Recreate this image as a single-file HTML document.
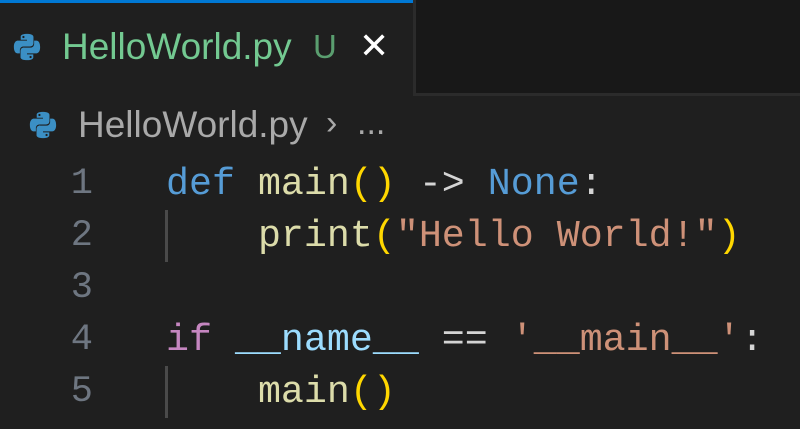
<!DOCTYPE html>
<html><head><style>
body{margin:0;width:800px;height:429px;background:#1f1f1f;overflow:hidden;position:relative;font-family:"Liberation Sans",sans-serif}
.topr{position:absolute;left:413px;top:0;width:387px;height:93px;background:#181818;border-left:3px solid #2b2b2b;border-bottom:3px solid #2b2b2b}
.blue{position:absolute;left:0;top:0;width:413px;height:3px;background:#0078d4}
.t{position:absolute;white-space:pre;font-size:37px}
.code{position:absolute;font-family:"Liberation Mono",monospace;font-size:38.3px;white-space:pre;line-height:52px}
.ln{position:absolute;left:0;width:93px;text-align:right;color:#6e7681;font-family:"Liberation Mono",monospace;font-size:37px;line-height:52px}
.g{position:absolute;left:165px;width:3px;background:#4a4a4a;height:52px}
</style></head><body>
<div class="blue"></div><div class="topr"></div>
<svg style="position:absolute;left:12px;top:32px" width="30" height="30" viewBox="0 0 32 32"><path fill="#3b8fc4" d="M15.9 2c-7 0-6.6 3-6.6 3v3.2h6.7v1H6.6S2 8.7 2 15.9s4 6.9 4 6.9h2.4v-3.4s-.1-4 4-4h6.7s3.8.1 3.8-3.7V5.4S23.5 2 15.9 2zm-3.7 2.1a1.2 1.2 0 110 2.4 1.2 1.2 0 010-2.4z"/><path fill="#3b8fc4" d="M16.1 30c7 0 6.6-3 6.6-3v-3.2H16v-1h9.4s4.6.5 4.6-6.7-4-6.9-4-6.9h-2.4v3.4s.1 4-4 4h-6.7s-3.8-.1-3.8 3.7v6.3S8.5 30 16.1 30zm3.7-2.1a1.2 1.2 0 110-2.4 1.2 1.2 0 010 2.4z"/></svg>
<div class="t" style="left:62px;top:26px;color:#73c991">HelloWorld.py</div>
<div class="t" style="left:313px;top:28px;color:#5a9e6f;font-size:33px">U</div>
<div class="t" style="left:359px;top:25px;color:#fff;font-size:36px">✕</div>
<svg style="position:absolute;left:28px;top:110px" width="30" height="30" viewBox="0 0 32 32"><path fill="#3b8fc4" d="M15.9 2c-7 0-6.6 3-6.6 3v3.2h6.7v1H6.6S2 8.7 2 15.9s4 6.9 4 6.9h2.4v-3.4s-.1-4 4-4h6.7s3.8.1 3.8-3.7V5.4S23.5 2 15.9 2zm-3.7 2.1a1.2 1.2 0 110 2.4 1.2 1.2 0 010-2.4z"/><path fill="#3b8fc4" d="M16.1 30c7 0 6.6-3 6.6-3v-3.2H16v-1h9.4s4.6.5 4.6-6.7-4-6.9-4-6.9h-2.4v3.4s.1 4-4 4h-6.7s-3.8-.1-3.8 3.7v6.3S8.5 30 16.1 30zm3.7-2.1a1.2 1.2 0 110-2.4 1.2 1.2 0 010 2.4z"/></svg>
<div class="t" style="left:78px;top:104px;color:#a9a9a9">HelloWorld.py</div>
<div class="t" style="left:326px;top:104px;color:#a9a9a9;font-size:34px">›</div>
<div class="t" style="left:357px;top:104px;color:#a9a9a9;font-size:34px">...</div>
<div class="ln" style="top:158px">1<br>2<br>3<br>4<br>5</div>
<div class="g" style="top:210px"></div><div class="g" style="top:366px"></div>
<div class="code" style="left:166px;top:158px;color:#d4d4d4"><span style="color:#569cd6">def</span> <span style="color:#dcdcaa">main</span><span style="color:#ffd700">()</span> -&gt; <span style="color:#569cd6">None</span>:
    <span style="color:#dcdcaa">print</span><span style="color:#ffd700">(</span><span style="color:#ce9178">"Hello World!"</span><span style="color:#ffd700">)</span>

<span style="color:#c586c0">if</span> <span style="color:#9cdcfe">__name__</span> == <span style="color:#ce9178">'__main__'</span>:
    <span style="color:#dcdcaa">main</span><span style="color:#ffd700">()</span></div>
</body></html>
